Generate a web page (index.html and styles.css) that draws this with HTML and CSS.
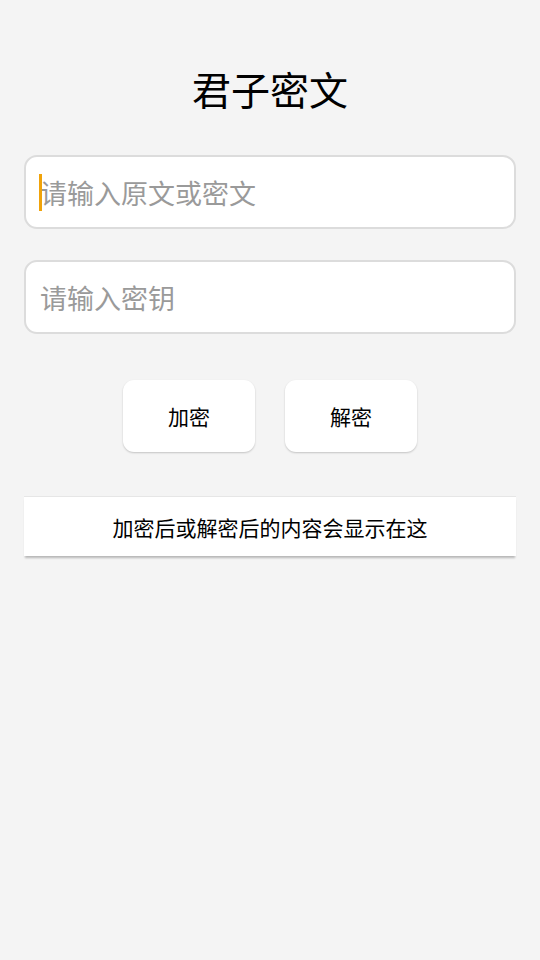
FILE: index.html
```html
<!DOCTYPE html>
<html lang="zh">
<head>
<meta charset="utf-8">
<link rel="stylesheet" href="styles.css">
</head>
<body>
<main class="page">
  <h1 class="title">君子密文</h1>
  <div class="field">
    <input class="input" type="text" placeholder="请输入原文或密文">
    <span class="caret"></span>
  </div>
  <div class="field">
    <input class="input" type="text" placeholder="请输入密钥">
  </div>
  <div class="actions">
    <button class="btn">加密</button>
    <button class="btn">解密</button>
  </div>
  <div class="result">加密后或解密后的内容会显示在这</div>
</main>
</body>
</html>
```
FILE: styles.css
```css
* { box-sizing: border-box; }
html, body {
  margin: 0;
  padding: 0;
  background: #f4f4f4;
  font-family: "Noto Sans CJK SC", "Noto Sans", sans-serif;
}
.page {
  padding: 0 24px 40px;
  display: flex;
  flex-direction: column;
}
.title {
  margin: 63px 0 42px;
  height: 50px;
  line-height: 50px;
  font-size: 39px;
  font-weight: 400;
  text-align: center;
  color: #000;
}
.field {
  position: relative;
  margin-bottom: 31px;
}
.input {
  display: block;
  width: 100%;
  height: 74px;
  border: 2px solid #dcdcdc;
  border-radius: 13px;
  background: #fff;
  padding: 0 14px;
  font-family: inherit;
  font-size: 27px;
  color: #222;
  outline: none;
}
.input::placeholder {
  color: #9a9a9a;
}
.caret {
  position: absolute;
  left: 15px;
  top: 19px;
  width: 3px;
  height: 37px;
  background: #f0a30a;
}
.actions {
  display: flex;
  justify-content: center;
  gap: 30px;
  margin-top: 15px;
  margin-bottom: 44px;
}
.btn {
  width: 132px;
  height: 72px;
  border: none;
  border-radius: 11px;
  background: #fff;
  box-shadow: 0 1px 2px rgba(0,0,0,0.2);
  font-family: inherit;
  font-size: 21px;
  color: #000;
  padding: 0;
}
.result {
  height: 60px;
  background: #fff;
  border-top: 1px solid #e6e6e6;
  box-shadow: 0 3px 2px -1px rgba(0,0,0,0.25);
  display: flex;
  align-items: center;
  justify-content: center;
  font-size: 21px;
  color: #000;
}
```
